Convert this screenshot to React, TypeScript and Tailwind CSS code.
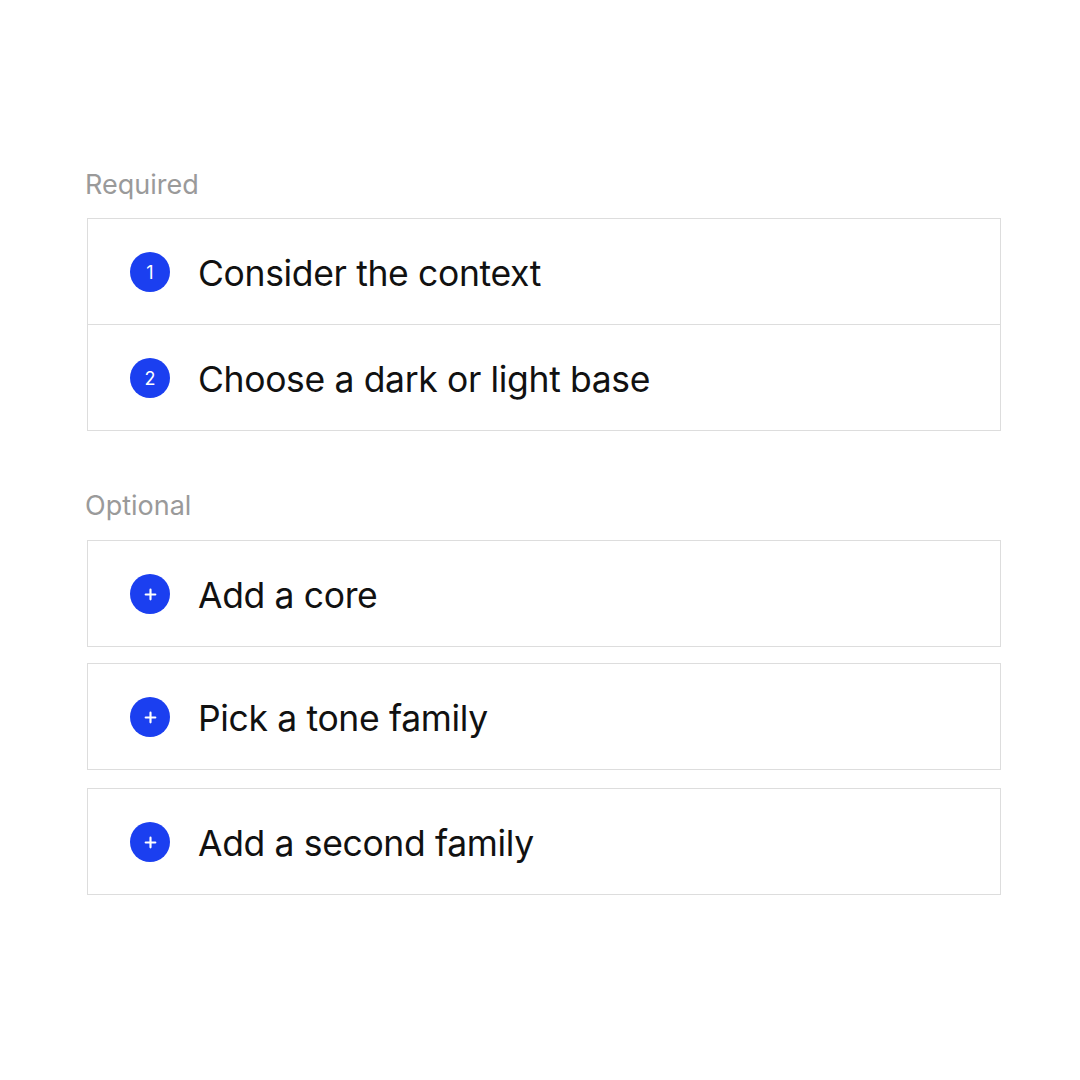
import React from "react";

function Badge({ children }: { children: React.ReactNode }) {
  return (
    <div className="flex h-[40px] w-[40px] shrink-0 items-center justify-center rounded-full bg-[#1b3ff0] text-[18px] text-white">
      {children}
    </div>
  );
}

function Plus() {
  return (
    <svg width="15" height="15" viewBox="0 0 14 14">
      <path d="M7 2.5v9M2.5 7h9" stroke="white" strokeWidth="2" strokeLinecap="round" />
    </svg>
  );
}

function Row({ icon, label }: { icon: React.ReactNode; label: string }) {
  return (
    <div className="flex h-[105px] items-center pl-[42px]">
      <div className="pt-[1px]">
        <Badge>{icon}</Badge>
      </div>
      <span className="ml-[28px] pt-[4px] text-[35.5px] tracking-[-0.35px] text-[#111]">{label}</span>
    </div>
  );
}

export default function App() {
  return (
    <div
      className="h-[1080px] w-[1080px] bg-white pl-[87px] pt-[167px]"
      style={{ fontFamily: "Inter, 'Noto Sans', sans-serif" }}
    >
      <div className="ml-[-2px] mb-[16px] h-[35px] text-[27px] leading-[35px] text-[#9a9a9a]">Required</div>
      <div className="w-[914px] border border-[#dddddd]">
        <Row icon="1" label="Consider the context" />
        <div className="h-px bg-[#dddddd]" />
        <Row icon="2" label="Choose a dark or light base" />
      </div>
      <div className="ml-[-2px] mt-[57px] mb-[17px] h-[35px] text-[27px] leading-[35px] text-[#9a9a9a]">Optional</div>
      <div className="flex w-[914px] flex-col">
        <div className="border border-[#dddddd]">
          <Row icon={<Plus />} label="Add a core" />
        </div>
        <div className="mt-[16px] border border-[#dddddd]">
          <Row icon={<Plus />} label="Pick a tone family" />
        </div>
        <div className="mt-[18px] border border-[#dddddd]">
          <Row icon={<Plus />} label="Add a second family" />
        </div>
      </div>
    </div>
  );
}
